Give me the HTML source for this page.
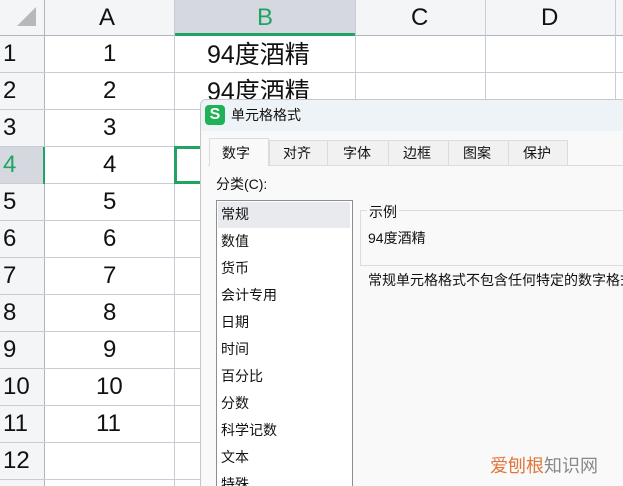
<!DOCTYPE html><html><head><meta charset="utf-8"><style>
*{margin:0;padding:0;box-sizing:border-box}
html,body{width:623px;height:486px;overflow:hidden}
body{background:#fff;position:relative;font-family:"Liberation Sans","Noto Sans CJK SC",sans-serif;color:#111}
.a{position:absolute}
.hl{position:absolute;height:1px;background:#c8ccd6}
.vl{position:absolute;width:1px;background:#c8ccd6}
.n{position:absolute;font-size:24px;line-height:36px}
.cj{font-size:14px;position:absolute;line-height:27px}
</style></head><body>
<div class="a" style="left:0;top:0;width:623px;height:35px;background:#f4f5f7"></div>
<div class="a" style="left:175px;top:0;width:181px;height:35px;background:#d5d8de"></div>
<div class="a" style="left:0;top:35px;width:44px;height:451px;background:#f4f5f7"></div>
<div class="a" style="left:0;top:147px;width:44px;height:37px;background:#d5d8de"></div>
<svg class="a" style="left:17px;top:7px" width="20" height="20"><polygon points="19,0 19,19 0,19" fill="#b8b8b8"/></svg>
<div class="hl" style="left:0;top:35px;width:623px;background:#b0b4bd"></div>
<div class="a" style="left:175px;top:33px;width:181px;height:3px;background:#21a366"></div>
<div class="vl" style="left:44px;top:0;height:486px;background:#b0b4bd"></div>
<div class="vl" style="left:174px;top:0;height:486px"></div>
<div class="vl" style="left:355px;top:0;height:486px"></div>
<div class="vl" style="left:485px;top:0;height:486px"></div>
<div class="vl" style="left:615px;top:0;height:486px"></div>
<div class="n" style="left:99px;top:0">A</div>
<div class="n" style="left:257px;top:0;color:#21a366">B</div>
<div class="n" style="left:411px;top:0">C</div>
<div class="n" style="left:541px;top:0">D</div>
<div id="g"></div>
<div class="n" style="left:207px;top:37px;font-size:25px">94度酒精</div>
<div class="n" style="left:207px;top:74px;font-size:25px">94度酒精</div>
<div class="a" style="left:174px;top:146px;width:30px;height:38px;border:3px solid #21a366;border-right:none"></div>
<div class="a" style="left:43px;top:147px;width:2px;height:37px;background:#21a366"></div>
<script>
var h='';for(var i=1;i<=12;i++){var t=35+(i-1)*37;h+='<div class="hl" style="left:0;top:'+(t+37)+'px;width:623px"></div>';h+='<div class="n" style="left:3px;top:'+(t+1)+'px;'+(i==4?'color:#21a366':'')+'">'+i+'</div>';if(i<=11)h+='<div class="n" style="left:'+(i>9?96:103)+'px;top:'+(t+1)+'px">'+i+'</div>';}
document.getElementById('g').innerHTML=h;
</script>
<div class="a" style="left:200px;top:99px;width:430px;height:400px;background:#f9f9f9;border:1px solid #c4c8cc;border-radius:6px 0 0 0"></div>
<div class="a" style="left:201px;top:100px;width:422px;height:31px;background:#edf3f7;border-radius:6px 0 0 0"></div>
<div class="a" style="left:205px;top:105px;width:20px;height:20px;background:#1fb155;border-radius:4px;color:#fff;font-weight:bold;font-size:16px;line-height:20px;text-align:center">S</div>
<div class="cj" style="left:231px;top:102px">单元格格式</div>
<div class="a" style="left:208px;top:165px;width:415px;height:1px;background:#dcdcdc"></div>
<div class="a" style="left:209px;top:138px;width:60px;height:28px;background:#f9f9f9;border:1px solid #dcdcdc;border-bottom:none"></div>
<div class="cj" style="left:222px;top:140px">数字</div>
<div class="a" style="left:269px;top:140px;width:299px;height:25px;background:#f1f1f1;border:1px solid #dcdcdc;border-bottom:none"></div>
<div class="vl" style="left:327px;top:140px;height:25px;background:#dcdcdc"></div>
<div class="vl" style="left:388px;top:140px;height:25px;background:#dcdcdc"></div>
<div class="vl" style="left:448px;top:140px;height:25px;background:#dcdcdc"></div>
<div class="vl" style="left:508px;top:140px;height:25px;background:#dcdcdc"></div>
<div class="cj" style="left:283px;top:140px">对齐</div>
<div class="cj" style="left:343px;top:140px">字体</div>
<div class="cj" style="left:403px;top:140px">边框</div>
<div class="cj" style="left:463px;top:140px">图案</div>
<div class="cj" style="left:523px;top:140px">保护</div>
<div class="cj" style="left:216px;top:171px">分类(C):</div>
<div class="a" style="left:216px;top:200px;width:137px;height:300px;background:#fff;border:1px solid #8a8e96"></div>
<div class="a" style="left:218px;top:202px;width:132px;height:26px;background:#e8eaee"></div>
<div class="cj" style="left:221px;top:201px">常规<br>数值<br>货币<br>会计专用<br>日期<br>时间<br>百分比<br>分数<br>科学记数<br>文本<br>特殊</div>
<div class="a" style="left:360px;top:210px;width:270px;height:56px;border:1px solid #dcdcdc"></div>
<div class="cj" style="left:367px;top:199px;background:#f9f9f9;padding:0 2px">示例</div>
<div class="cj" style="left:368px;top:225px">94度酒精</div>
<div class="cj" style="left:368px;top:267px;white-space:nowrap">常规单元格格式不包含任何特定的数字格式。</div>
<div class="a" style="left:490px;top:455px;font-size:18px;line-height:22px;white-space:nowrap"><span style="color:#e0763a">爱刨根</span><span style="color:#888">知识网</span></div>
</body></html>
